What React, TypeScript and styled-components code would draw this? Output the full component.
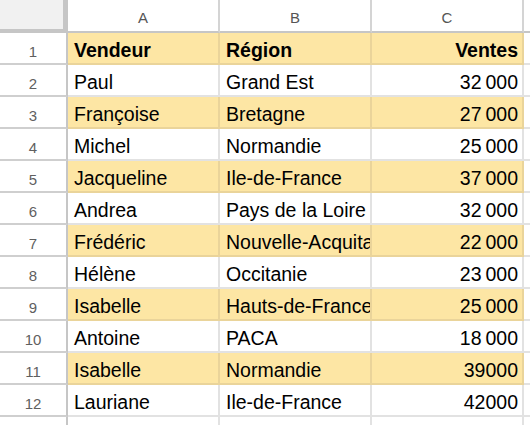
import React from "react";
import styled, { createGlobalStyle, css } from "styled-components";

const Global = createGlobalStyle`
  html, body { margin: 0; padding: 0; background: #ffffff; overflow: hidden; }
  body { font-family: "Liberation Sans", Arial, sans-serif; }
`;

const YELLOW = "#fde6a4";
const YELLOW_LINE = "#ead49a";
const GRID = "#e2e2e2";
const HEAD_LINE = "#c6c6c6";

const Sheet = styled.div`
  display: grid;
  grid-template-columns: 68px 152px 152px 152px 1fr;
  grid-template-rows: 33px repeat(13, 32px);
  width: 530px;
  height: 425px;
  overflow: hidden;
`;

const Corner = styled.div`
  box-sizing: border-box;
  background: #f1f1f1;
  border-right: 5px solid ${HEAD_LINE};
  border-bottom: 4px solid ${HEAD_LINE};
`;

const ColHead = styled.div`
  box-sizing: border-box;
  display: flex;
  align-items: center;
  justify-content: center;
  padding-top: 4px;
  background: #ffffff;
  border-right: 2px solid #d4d4d4;
  border-bottom: 2px solid ${HEAD_LINE};
  color: #555555;
  font-size: 15px;
`;

const RowHead = styled.div`
  box-sizing: border-box;
  display: flex;
  align-items: flex-end;
  justify-content: center;
  padding-bottom: 3px;
  background: #ffffff;
  border-right: 2px solid ${HEAD_LINE};
  border-bottom: 2px solid #cfcfcf;
  color: #5f5f5f;
  font-size: 15px;
`;

const Cell = styled.div<{ $alt?: boolean; $bold?: boolean; $right?: boolean }>`
  box-sizing: border-box;
  display: flex;
  align-items: flex-end;
  justify-content: ${(p) => (p.$right ? "flex-end" : "flex-start")};
  padding: 0 4px 1px 6px;
  overflow: hidden;
  white-space: nowrap;
  font-size: 19.5px;
  color: #000000;
  font-weight: ${(p) => (p.$bold ? 700 : 400)};
  background: #ffffff;
  border-right: 2px solid ${GRID};
  border-bottom: 2px solid ${GRID};
  ${(p) =>
    p.$alt &&
    css`
      background: ${YELLOW};
      border-right-color: ${YELLOW_LINE};
      border-bottom-color: ${YELLOW_LINE};
    `}
`;

const Text = styled.span`
  display: block;
  line-height: normal;
`;

const NB = "\u202F";

const rows: [string, string, string][] = [
  ["Vendeur", "Région", "Ventes"],
  ["Paul", "Grand Est", `32${NB}000`],
  ["Françoise", "Bretagne", `27${NB}000`],
  ["Michel", "Normandie", `25${NB}000`],
  ["Jacqueline", "Ile-de-France", `37${NB}000`],
  ["Andrea", "Pays de la Loire", `32${NB}000`],
  ["Frédéric", "Nouvelle-Acquitaine", `22${NB}000`],
  ["Hélène", "Occitanie", `23${NB}000`],
  ["Isabelle", "Hauts-de-France", `25${NB}000`],
  ["Antoine", "PACA", `18${NB}000`],
  ["Isabelle", "Normandie", "39000"],
  ["Lauriane", "Ile-de-France", "42000"],
];

export default function App() {
  return (
    <>
      <Global />
      <Sheet>
        <Corner />
        <ColHead>A</ColHead>
        <ColHead>B</ColHead>
        <ColHead>C</ColHead>
        <ColHead />
        {rows.map((r, i) => {
          const alt = i % 2 === 0;
          const bold = i === 0;
          return (
            <React.Fragment key={i}>
              <RowHead>{i + 1}</RowHead>
              <Cell $alt={alt} $bold={bold}>
                <Text>{r[0]}</Text>
              </Cell>
              <Cell $alt={alt} $bold={bold}>
                <Text>{r[1]}</Text>
              </Cell>
              <Cell $alt={alt} $bold={bold} $right>
                <Text>{r[2]}</Text>
              </Cell>
              <Cell />
            </React.Fragment>
          );
        })}
        <RowHead />
        <Cell />
        <Cell />
        <Cell />
        <Cell />
      </Sheet>
    </>
  );
}
